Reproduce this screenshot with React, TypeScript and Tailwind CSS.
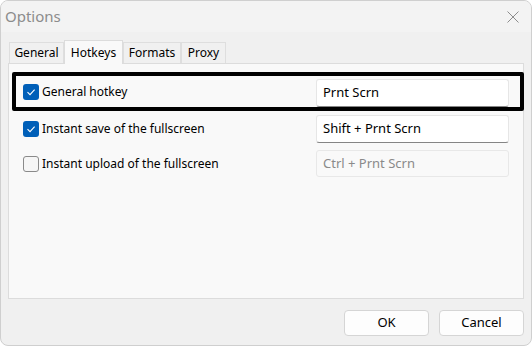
import { useState } from 'react'

const font = { fontFamily: '"Noto Sans", "Open Sans", sans-serif' }

function Check({ checked, onClick }: { checked: boolean; onClick: () => void }) {
  return checked ? (
    <button
      onClick={onClick}
      className="w-[16px] h-[16px] rounded-[3px] bg-[#005fb8] flex items-center justify-center shrink-0"
    >
      <svg width="10" height="10" viewBox="0 0 10 10" fill="none">
        <path d="M1.5 5.2 L4 7.6 L8.6 2.6" stroke="white" strokeWidth="1.1" />
      </svg>
    </button>
  ) : (
    <button
      onClick={onClick}
      className="w-[16px] h-[16px] rounded-[3px] border border-[#8a8a8a] bg-[#f6f6f6] shrink-0"
    />
  )
}

function HotkeyInput({ value, disabled }: { value: string; disabled?: boolean }) {
  return disabled ? (
    <div className="w-[193px] h-[27px] border border-[#e8e8e8] rounded-[3px] bg-[#f9f9f9] px-[6px] flex items-center text-[13px] text-[#8a8a8a]">
      {value}
    </div>
  ) : (
    <div className="w-[193px] h-[28px] border border-[#e6e6e6] border-b-[#858585] rounded-[3px] bg-white px-[6px] flex items-center text-[13px] text-black">
      {value}
    </div>
  )
}

export default function App() {
  const [general, setGeneral] = useState(true)
  const [save, setSave] = useState(true)
  const [upload, setUpload] = useState(false)

  const tabs = [
    { name: 'General', w: 'w-[55px]' },
    { name: 'Hotkeys', w: 'w-[59px]' },
    { name: 'Formats', w: 'w-[58px]' },
    { name: 'Proxy', w: 'w-[45px]' },
  ]

  return (
    <div className="w-[532px] h-[346px] bg-white" style={font}>
      <div className="w-full h-full rounded-[8px] border border-[#cfcfcf] bg-[#f0f0f0] flex flex-col overflow-hidden">
        <div className="h-[31px] bg-[#f3f3f3] flex items-center justify-between pl-[4px] pr-[12px] shrink-0">
          <span className="text-[15px] text-[#8c8c8c]">Options</span>
          <svg width="12" height="12" viewBox="0 0 12 12">
            <path d="M0.5 0.5 L11.5 11.5 M11.5 0.5 L0.5 11.5" stroke="#8c8c8c" strokeWidth="1" />
          </svg>
        </div>

        <div className="px-[7px] pt-[7px] flex flex-col">
          <div className="flex items-end h-[24px] pl-[1px]">
            {tabs.map((t) =>
              t.name === 'Hotkeys' ? (
                <div
                  key={t.name}
                  className={`${t.w} h-[24px] bg-[#f9f9f9] border border-b-0 border-[#dcdcdc] flex items-center justify-center text-[12px] text-black relative top-[1px] z-10`}
                >
                  {t.name}
                </div>
              ) : (
                <div
                  key={t.name}
                  className={`${t.w} h-[21px] bg-[#f0f0f0] border border-b-0 border-[#dedede] flex items-center justify-center text-[12px] text-black`}
                >
                  {t.name}
                </div>
              )
            )}
          </div>

          <div className="h-[236px] bg-[#f9f9f9] border border-[#dcdcdc] pl-[3px] pt-[8px] flex flex-col">
            <div className="h-[39px] border-[4px] border-black rounded-[2px] flex items-center justify-between pl-[7px] pr-[11px] -mr-[1px]">
              <label className="flex items-center gap-[3px] text-[12px] text-black">
                <Check checked={general} onClick={() => setGeneral(!general)} />
                General hotkey
              </label>
              <div className="mt-[2px]">
                <HotkeyInput value="Prnt Scrn" />
              </div>
            </div>

            <div className="h-[27px] mt-[4px] flex items-center justify-between pl-[11px] pr-[14px]">
              <label className="flex items-center gap-[3px] text-[12px] text-black">
                <Check checked={save} onClick={() => setSave(!save)} />
                Instant save of the fullscreen
              </label>
              <HotkeyInput value="Shift + Prnt Scrn" />
            </div>

            <div className="h-[27px] mt-[8px] flex items-center justify-between pl-[11px] pr-[14px]">
              <label className="flex items-center gap-[3px] text-[12px] text-black">
                <Check checked={upload} onClick={() => setUpload(!upload)} />
                Instant upload of the fullscreen
              </label>
              <HotkeyInput value="Ctrl + Prnt Scrn" disabled />
            </div>
          </div>

          <div className="flex justify-end gap-[10px] mt-[11px]">
            <button className="w-[85px] h-[26px] bg-[#fdfdfd] border border-[#d5d5d5] rounded-[4px] text-[13px] text-black">
              OK
            </button>
            <button className="w-[85px] h-[26px] bg-[#fdfdfd] border border-[#d5d5d5] rounded-[4px] text-[13px] text-black">
              Cancel
            </button>
          </div>
        </div>
      </div>
    </div>
  )
}
